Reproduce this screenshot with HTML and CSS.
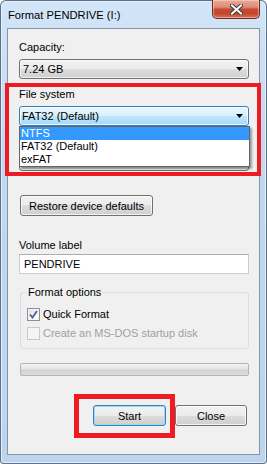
FILE: index.html
```html
<!DOCTYPE html>
<html lang="en">

<head>
    <meta charset="UTF-8" />
    <meta name="viewport" content="width=device-width, initial-scale=1.0" />
    <title>Format PENDRIVE (I:)</title>
    <link rel="stylesheet" href="styles.css">
</head>

<body>
    <div class="window">
        <div class="titlebar">
            <span class="title">Format PENDRIVE (I:)</span>
            <button class="close-btn" type="button" aria-label="Close">
                <svg width="13" height="11" viewBox="0 0 13 11">
                    <path d="M2 1.5 L11 9.5 M11 1.5 L2 9.5" stroke="#3b3b3b" stroke-width="4" stroke-linecap="square" />
                    <path d="M2 1.5 L11 9.5 M11 1.5 L2 9.5" stroke="#ffffff" stroke-width="2" stroke-linecap="square" />
                </svg>
            </button>
        </div>

        <div class="client">
            <label class="field-label">Capacity:</label>
            <div class="combo">
                <span>7.24 GB</span>
                <svg class="arrow" width="7" height="4" viewBox="0 0 7 4"><polygon points="0,0 7,0 3.5,4" fill="#000" /></svg>
            </div>

            <label class="field-label gap">File system</label>
            <div class="combo-wrap">
                <div class="combo combo-hot">
                    <span>FAT32 (Default)</span>
                    <svg class="arrow" width="7" height="4" viewBox="0 0 7 4"><polygon points="0,0 7,0 3.5,4" fill="#000" /></svg>
                </div>
                <ul class="dropdown-list">
                    <li class="selected">NTFS</li>
                    <li>FAT32 (Default)</li>
                    <li>exFAT</li>
                </ul>
            </div>

            <!-- allocation unit size row, covered by the open list -->
            <div class="field-label gap spacer"></div>
            <div class="combo combo-alloc">
                <span></span>
                <svg class="arrow" width="7" height="4" viewBox="0 0 7 4"><polygon points="0,0 7,0 3.5,4" fill="#000" /></svg>
            </div>

            <button class="btn restore-btn" type="button">Restore device defaults</button>

            <label class="field-label volume-label">Volume label</label>
            <input class="text-input" type="text" value="PENDRIVE">

            <fieldset class="group">
                <legend>Format options</legend>
                <div class="check-row">
                    <span class="checkbox checked">
                        <svg width="9" height="9" viewBox="0 0 9 9"><path d="M1 4.5 L3.5 7.5 L8 1" fill="none" stroke="#4a5f97" stroke-width="1.8" /></svg>
                    </span>
                    <span>Quick Format</span>
                </div>
                <div class="check-row disabled">
                    <span class="checkbox"></span>
                    <span>Create an MS-DOS startup disk</span>
                </div>
            </fieldset>

            <div class="progress"></div>

            <div class="actions">
                <button class="btn btn-default" type="button">Start</button>
                <button class="btn" type="button">Close</button>
            </div>
        </div>

        <div class="annotation ann-filesystem"></div>
        <div class="annotation ann-start"></div>
    </div>
</body>

</html>
```

FILE: styles.css
```css
* {
    box-sizing: border-box;
}

body {
    margin: 0;
    background: #ffffff;
    font-family: "Liberation Sans", Arial, sans-serif;
    font-size: 11px;
    color: #000;
}

.window {
    position: relative;
    width: 267px;
    height: 464px;
    border-radius: 6px 6px 4px 4px;
    background: linear-gradient(to bottom, #d3e5f8 0%, #c2d8f1 30%, #bcd4ee 100%);
    box-shadow: inset 0 0 0 1px #5d7088, inset 0 0 0 2px #e4effb;
}

/* title bar */
.titlebar {
    display: flex;
    justify-content: space-between;
    align-items: flex-start;
    height: 28px;
}

.title {
    margin: 8px 0 0 8px;
    font-size: 11.2px;
    line-height: 14px;
}

.close-btn {
    display: flex;
    align-items: center;
    justify-content: center;
    width: 48px;
    height: 19px;
    margin-right: 7px;
    padding: 0;
    border: 1px solid #6b2b22;
    border-top: none;
    border-radius: 0 0 5px 5px;
    background: linear-gradient(to bottom, #e9ab9b 0%, #dc8a76 40%, #c64b34 52%, #c2452d 75%, #d9735a 100%);
    box-shadow: inset 0 0 0 1px rgba(255, 220, 210, 0.5);
}

/* client area */
.client {
    margin-left: 7px;
    width: 253px;
    height: 427px;
    padding: 12px 0 0 11px;
    border: 1px solid #8794a6;
    background: #f0f0f0;
}

.field-label {
    display: block;
    line-height: 13px;
}

.field-label.gap {
    margin-top: 9px;
}

.spacer {
    height: 13px;
}

.combo {
    display: flex;
    justify-content: space-between;
    align-items: center;
    width: 230px;
    height: 20px;
    margin-top: 5px;
    padding: 0 5px 0 3px;
    border: 1px solid #707070;
    border-radius: 3px;
    background: linear-gradient(to bottom, #f2f2f2 0%, #ebebeb 50%, #dddddd 50%, #cfcfcf 100%);
    box-shadow: inset 0 0 0 1px rgba(255, 255, 255, 0.7);
    line-height: 18px;
}

.combo-hot {
    margin-top: 0;
    padding-left: 2px;
    border-color: #3c7fb1;
    background: linear-gradient(to bottom, #eaf6fd 0%, #d9f0fc 50%, #bee6fd 50%, #a7d9f5 100%);
}

.combo-alloc {
    margin-top: 3px;
}

.combo-wrap {
    position: relative;
    width: 230px;
    margin-top: 5px;
}

.dropdown-list {
    position: absolute;
    top: 20px;
    left: 0;
    z-index: 2;
    width: 231px;
    margin: 0;
    padding: 0;
    list-style: none;
    border: 1px solid #646464;
    background: #fff;
    box-shadow: 2px 2px 2px rgba(0, 0, 0, 0.35);
}

.dropdown-list li {
    height: 13px;
    padding-left: 1px;
    line-height: 13px;
}

.dropdown-list li.selected {
    background: #3399ff;
    color: #fff;
}

/* buttons */
.btn {
    height: 21px;
    padding: 0;
    border: 1px solid #707070;
    border-radius: 3px;
    background: linear-gradient(to bottom, #f2f2f2 0%, #ebebeb 50%, #dddddd 50%, #cfcfcf 100%);
    box-shadow: inset 0 0 0 1px rgba(255, 255, 255, 0.75);
    font-family: inherit;
    font-size: 11px;
    color: #000;
}

.restore-btn {
    display: block;
    width: 133px;
    margin: 24px 0 0 1px;
}

.btn-default {
    border-color: #3c7fb1;
    box-shadow: inset 0 0 0 1px #94dcf9;
}

.volume-label {
    margin-top: 23px;
}

.text-input {
    display: block;
    width: 230px;
    height: 20px;
    margin-top: 2px;
    padding: 0 0 0 4px;
    border: 1px solid #c9ccd3;
    border-top-color: #abadb3;
    background: #fff;
    font-family: inherit;
    font-size: 11px;
    color: #000;
}

/* format options */
.group {
    width: 229px;
    margin: 12px 0 0 1px;
    padding: 9px 0 8px 6px;
    border: 1px solid #d5dfe5;
    border-radius: 3px;
}

.group legend {
    margin-left: 0;
    padding: 0 1px;
    line-height: 13px;
}

.check-row {
    display: flex;
    align-items: center;
    gap: 3px;
    height: 13px;
    line-height: 13px;
}

.check-row + .check-row {
    margin-top: 6px;
}

.checkbox {
    display: flex;
    align-items: center;
    justify-content: center;
    width: 13px;
    height: 13px;
    border: 1px solid #8e8f8f;
    background: linear-gradient(135deg, #dcdcdc 0%, #f6f6f6 60%, #ffffff 100%);
    box-shadow: inset 0 0 0 1px #f4f4f4;
}

.check-row.disabled {
    color: #a0a0a0;
}

.check-row.disabled .checkbox {
    border-color: #c9c9c9;
    background: #f4f4f4;
    box-shadow: none;
}

.progress {
    width: 229px;
    height: 13px;
    margin: 14px 0 0 1px;
    border: 1px solid #b4b4b4;
    border-radius: 2px;
    background: linear-gradient(to bottom, #f3f3f3 0%, #e4e4e4 45%, #d2d2d2 55%, #dcdcdc 100%);
}

.actions {
    display: flex;
    gap: 9px;
    margin: 29px 0 0 74px;
}

.actions .btn {
    width: 72px;
}

.actions .btn-default {
    width: 73px;
}

/* red highlight boxes */
.annotation {
    position: absolute;
    border: 4px solid #ed1c24;
}

.ann-filesystem {
    left: 5px;
    top: 83px;
    width: 256px;
    height: 93px;
}

.ann-start {
    left: 74px;
    top: 394px;
    width: 101px;
    height: 44px;
    border-width: 5px;
}
```
